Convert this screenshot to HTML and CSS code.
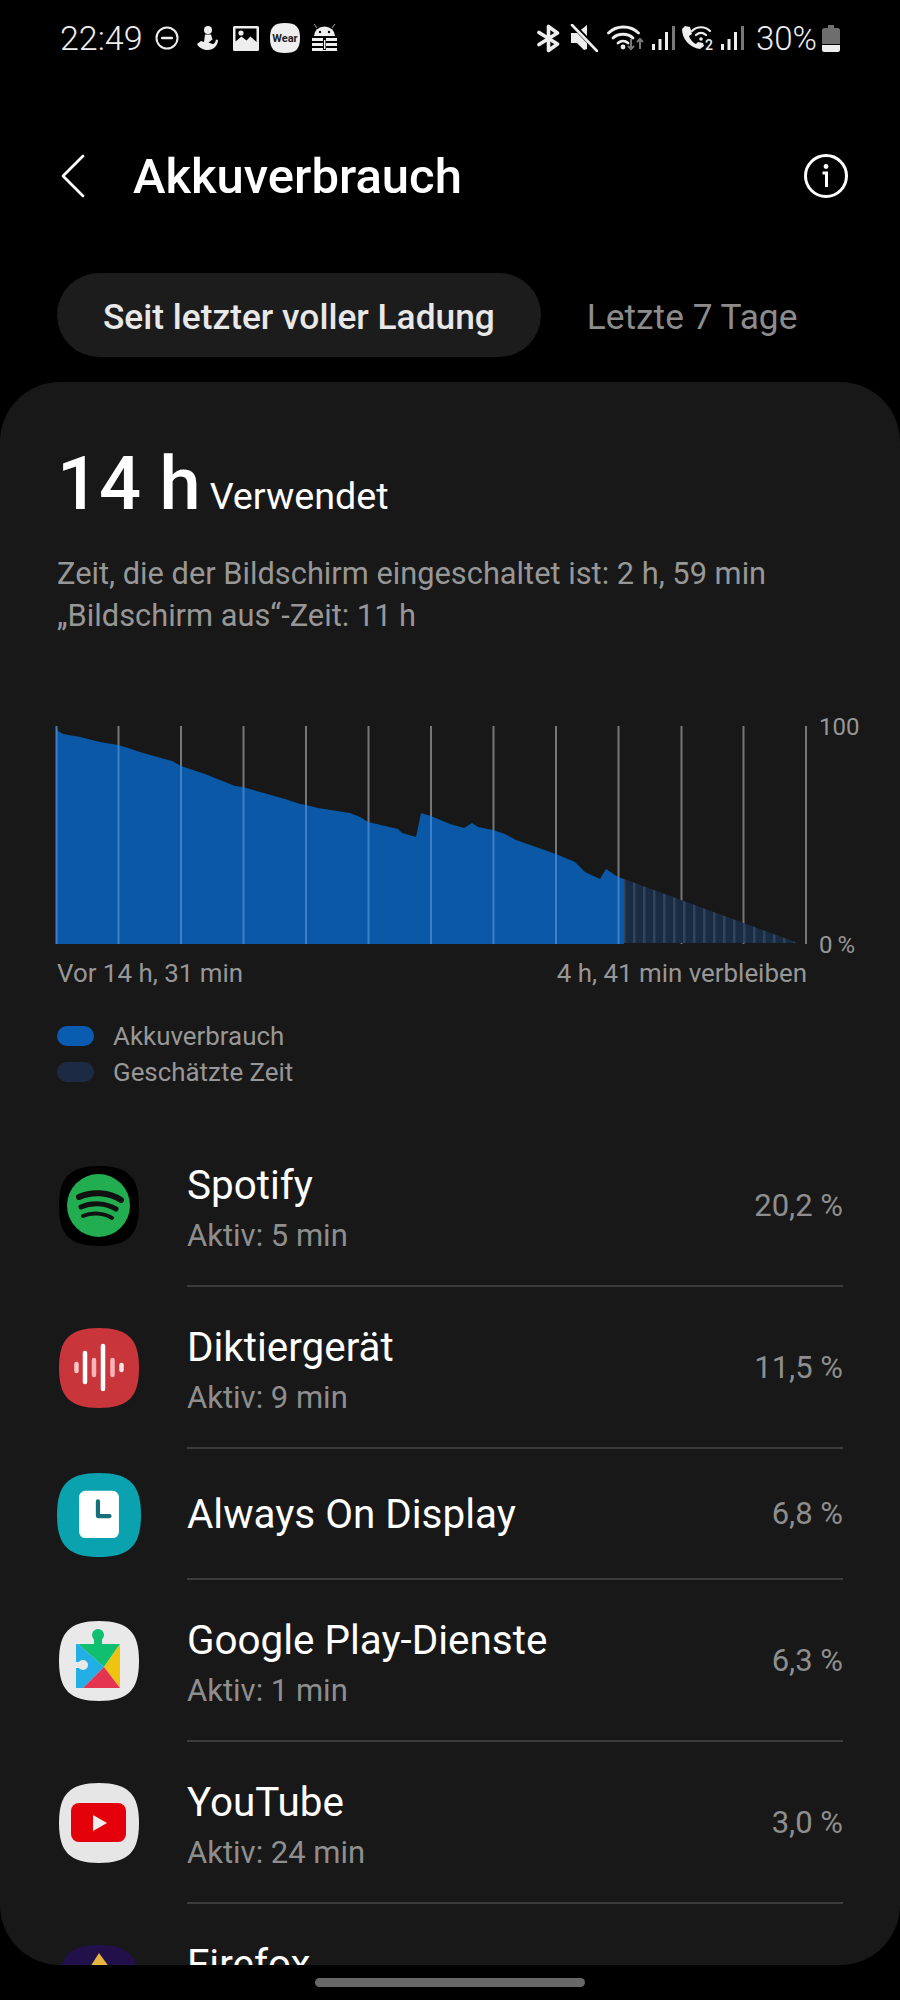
FILE: index.html
```html
<!DOCTYPE html>
<html lang="de">
<head>
  <meta charset="UTF-8">
  <title>Akkuverbrauch</title>
  <link rel="stylesheet" href="styles.css">
</head>
<body>

  <!-- Statusleiste -->
  <div class="status-bar">
    <div class="status-left">
      <span class="status-time">22:49</span>
      <svg class="ic-dnd" width="24" height="24" viewBox="0 0 24 24"><circle cx="12" cy="12" r="10.5" fill="none" stroke="#eee" stroke-width="2"/><rect x="6" y="10.8" width="12" height="2.4" rx="1" fill="#eee"/></svg>
      <svg class="ic-health" width="24" height="26" viewBox="0 0 24 26"><circle cx="13" cy="5" r="4" fill="#eee"/><path d="M10 9.500h6l1.500 5-4 3 4 1.500c2 0 3-2 3.500-4.500l2 .5c0 6-5 10-10 10-4 0-9-2-11-6l4-3 3 1z" fill="#eee"/></svg>
      <svg class="ic-image" width="26" height="25" viewBox="0 0 26 25"><path fill-rule="evenodd" d="M1.5 0h23A1.5 1.5 0 0 1 26 1.500v22a1.500 1.500 0 0 1-1.500 1.500h-23A1.500 1.500 0 0 1 0 23.500v-22A1.500 1.500 0 0 1 1.500 0zM2.500 2.500v13l6-5 5 4 4-4 6 5.500V2.500z" fill="#eee"/><circle cx="8" cy="7" r="2.600" fill="#eee"/></svg>
      <svg class="ic-wear" width="30" height="30" viewBox="0 0 30 30"><path d="M15 0C26 0 30 4 30 15S26 30 15 30 0 26 0 15 4 0 15 0Z" fill="#eee"/><text x="15" y="19" text-anchor="middle" class="wear-text">Wear</text></svg>
      <svg class="ic-keep" width="27" height="28" viewBox="0 0 27 28"><path d="M3 12a10.500 9.500 0 0 1 21 0z" fill="#eee"/><path d="M6 4 3 0M21 4l3-4" stroke="#aaa" stroke-width="1"/><circle cx="9" cy="8" r="1.200" fill="#000"/><circle cx="18" cy="8" r="1.200" fill="#000"/><path d="M1 14h25v3H1zM1 19h25v3H1zM1 24h25v3H1z" fill="#eee"/><rect x="12" y="13" width="3" height="13" fill="#000"/><rect x="13" y="16" width="1.400" height="9" fill="#eee"/></svg>
    </div>
    <div class="status-right">
      <svg class="ic-bt" width="25" height="29" viewBox="0 0 25 29"><path d="M12.500 2.500v24l9-6.500L3 8.500M12.500 2.500l9 6.500L3 20.500" fill="none" stroke="#eee" stroke-width="3.600" stroke-linejoin="round" stroke-linecap="round"/></svg>
      <svg class="ic-mute" width="28" height="28" viewBox="0 0 28 28"><path d="M1 9h6l10-8v24l-3 1-7-7H1z" fill="#eee"/><path d="M2 0l25 26" stroke="#000" stroke-width="5"/><path d="M2 1l25 26" stroke="#eee" stroke-width="2.600" stroke-linecap="round"/></svg>
      <svg class="ic-wifi" width="38" height="28" viewBox="0 0 38 28"><g fill="none" stroke="#eee" stroke-width="2.800" stroke-linecap="round"><path d="M1.500 9c8-8 22-8 30 0"/><path d="M6 14c5-5 15-5 20 0"/><path d="M11 19c3-2.500 7-2.500 10 0"/></g><circle cx="16" cy="23" r="2.400" fill="#eee"/><path d="M24 15v10m-3-3 3 3 3-3" fill="none" stroke="#777" stroke-width="2"/><path d="M33 25V15m-3 3 3-3 3 3" fill="none" stroke="#777" stroke-width="2"/></svg>
      <svg class="ic-signal" width="23" height="24" viewBox="0 0 23 24"><rect x="0" y="18" width="3" height="6" fill="#eee"/><rect x="6.500" y="13" width="3" height="11" fill="#eee"/><rect x="13" y="6" width="3" height="18" fill="#eee"/><rect x="20" y="0" width="3" height="24" fill="#777"/></svg>
      <svg class="ic-call" width="34" height="28" viewBox="0 0 34 28"><path d="M4 2 1 5c0 10 8 19 18 20l4-3-1-3-5-1-2 2c-3-1-6-5-7-8l3-2-2-7z" fill="#eee"/><g fill="none" stroke="#eee" stroke-width="2.200" stroke-linecap="round"><path d="M11 7c5-5 13-5 18 0"/><path d="M15 11c3-2.500 7-2.500 10 0"/></g><circle cx="20" cy="15" r="1.800" fill="#eee"/><text x="24" y="26" class="sim-text">2</text></svg>
      <svg class="ic-signal" width="23" height="24" viewBox="0 0 23 24"><rect x="0" y="18" width="3" height="6" fill="#eee"/><rect x="6.500" y="13" width="3" height="11" fill="#eee"/><rect x="13" y="6" width="3" height="18" fill="#eee"/><rect x="20" y="0" width="3" height="24" fill="#777"/></svg>
      <span class="status-batt">30%</span>
      <svg class="ic-batt" width="18" height="27" viewBox="0 0 18 27"><path d="M6 0h6v3h3.500A2.500 2.500 0 0 1 18 5.500V19H0V5.500A2.500 2.500 0 0 1 2.500 3H6z" fill="#6e6e6e"/><path d="M0 20h18v4.500a2.500 2.500 0 0 1-2.500 2.500h-13A2.500 2.500 0 0 1 0 24.500z" fill="#eee"/></svg>
    </div>
  </div>

  <!-- Kopfzeile -->
  <header class="app-bar">
    <svg class="back-icon" width="26" height="44" viewBox="0 0 26 44"><path d="M23 2 3 22l20 20" fill="none" stroke="#fff" stroke-width="2.800" stroke-linecap="round" stroke-linejoin="round"/></svg>
    <h1 class="app-title">Akkuverbrauch</h1>
    <svg class="info-icon" width="44" height="44" viewBox="0 0 44 44"><circle cx="22" cy="22" r="20.500" fill="none" stroke="#fff" stroke-width="3"/><circle cx="22" cy="12.500" r="2.400" fill="#fff"/><path d="M18.500 19H22.500V33" fill="none" stroke="#fff" stroke-width="3"/></svg>
  </header>

  <!-- Tabs -->
  <div class="tabs">
    <div class="tab tab-active">Seit letzter voller Ladung</div>
    <div class="tab">Letzte 7 Tage</div>
  </div>

  <!-- Karte -->
  <main class="card">
    <div class="usage-head">
      <span class="usage-big">14 h</span>
      <span class="usage-label">Verwendet</span>
    </div>
    <p class="usage-desc">Zeit, die der Bildschirm eingeschaltet ist: 2 h, 59 min<br>„Bildschirm aus“-Zeit: 11 h</p>

    <!-- Diagramm -->
    <div class="chart">
      <svg class="chart-svg" width="752" height="220" viewBox="55 726 752 220">
        <defs>
          <pattern id="est-stripes" x="0" y="0" width="10" height="10" patternUnits="userSpaceOnUse">
            <rect width="10" height="10" fill="#1a2c44"/>
            <rect x="3" width="2.500" height="10" fill="#2f435c"/>
          </pattern>
          <clipPath id="used-clip">
            <path d="M56 727 58 732 63 735 80 738 100 743 118 746 125 748 143 754 172 762 181 767 205 775 235 787 243 788 285 800 300 805 306 806 318 809 350 814 360 818 368 823 398 830 402 834 416 838 421 814 431 817 450 825 464 829 472 824 478 828 493 831 505 835 516 841 556 855 575 863 585 873 600 880 606 870 618 878 624 880V945H56z"/>
          </clipPath>
        </defs>
        <g class="grid-lines">
          <path d="M56.500 727V945M118.500 727V945M181 727V945M243.500 727V945M306 727V945M368.500 727V945M431 727V945M493.500 727V945M556 727V945M618.500 727V945M681.500 727V945M743.500 727V945M806 727V945"/>
        </g>
        <path class="est-area" d="M624 880 798 944H624z"/>
        <rect class="used-area" x="55" y="726" width="570" height="220" clip-path="url(#used-clip)"/>
        <g class="grid-lines-used" clip-path="url(#used-clip)">
          <path d="M56.500 727V945M118.500 727V945M181 727V945M243.500 727V945M306 727V945M368.500 727V945M431 727V945M493.500 727V945M556 727V945M618.500 727V945"/>
        </g>
      </svg>
      <div class="chart-axis">
        <span>100</span>
        <span>0&#8201;%</span>
      </div>
    </div>
    <div class="chart-foot">
      <span>Vor 14 h, 31 min</span>
      <span>4 h, 41 min verbleiben</span>
    </div>

    <ul class="legend">
      <li><i class="swatch swatch-used"></i>Akkuverbrauch</li>
      <li><i class="swatch swatch-est"></i>Geschätzte Zeit</li>
    </ul>

    <!-- App-Liste -->
    <ul class="app-list">
      <li class="app-row">
        <svg class="app-icon" width="80" height="80" viewBox="0 0 80 80"><path d="M40 0C69 0 80 11 80 40S69 80 40 80 0 69 0 40 11 0 40 0Z" fill="#000"/><circle cx="39.500" cy="39.500" r="31.500" fill="#22ad50"/><g fill="none" stroke="#111" stroke-linecap="round"><path d="M20 31C33 25 50 26 62 34" stroke-width="6"/><path d="M22 41C33 36 47 37 57 43" stroke-width="5"/><path d="M24 50C33 46 45 47 53 52" stroke-width="4"/></g></svg>
        <div class="app-body">
          <div class="app-text"><div class="app-name">Spotify</div><div class="app-sub">Aktiv: 5 min</div></div>
          <span class="app-pct">20,2 %</span>
        </div>
      </li>
      <li class="app-row">
        <svg class="app-icon" width="80" height="80" viewBox="0 0 80 80"><path d="M40 0C69 0 80 11 80 40S69 80 40 80 0 69 0 40 11 0 40 0Z" fill="#c8353a"/><g stroke-linecap="round" stroke-width="4.500"><path d="M17.500 36v7" stroke="#f7c5c7"/><path d="M26 25v29" stroke="#fff"/><path d="M35 32v15" stroke="#f8b4b8"/><path d="M44 18v43" stroke="#fff"/><path d="M53.500 32v15" stroke="#f8b4b8"/><path d="M62.500 37v5" stroke="#fde4e5"/></g></svg>
        <div class="app-body">
          <div class="app-text"><div class="app-name">Diktiergerät</div><div class="app-sub">Aktiv: 9 min</div></div>
          <span class="app-pct">11,5 %</span>
        </div>
      </li>
      <li class="app-row app-row-short">
        <svg class="app-icon app-icon-big" width="84" height="84" viewBox="0 0 80 80"><path d="M40 0C69 0 80 11 80 40S69 80 40 80 0 69 0 40 11 0 40 0Z" fill="#0aa2ae"/><rect x="21" y="17" width="38" height="45" rx="6" fill="#fff"/><path d="M39 27v14h11" fill="none" stroke="#176f79" stroke-width="4" stroke-linecap="round" stroke-linejoin="round"/></svg>
        <div class="app-body">
          <div class="app-text"><div class="app-name">Always On Display</div></div>
          <span class="app-pct">6,8 %</span>
        </div>
      </li>
      <li class="app-row">
        <svg class="app-icon" width="80" height="80" viewBox="0 0 80 80"><path d="M40 0C69 0 80 11 80 40S69 80 40 80 0 69 0 40 11 0 40 0Z" fill="#e9e9e9"/><circle cx="39" cy="14" r="6" fill="#10c070"/><path d="M35 16h8v8h-8z" fill="#10c070"/><path d="M19 23H61L45 46z" fill="#10c070"/><path d="M19 23H17V67H24L45 46z" fill="#23aee6"/><path d="M61 23V67L45 46z" fill="#efc410"/><path d="M24 67 45 46 61 67z" fill="#e4344f"/><circle cx="24" cy="44" r="5" fill="#e9e9e9"/><path d="M16 41h8v6h-8z" fill="#e9e9e9"/></svg>
        <div class="app-body">
          <div class="app-text"><div class="app-name">Google Play-Dienste</div><div class="app-sub">Aktiv: 1 min</div></div>
          <span class="app-pct">6,3 %</span>
        </div>
      </li>
      <li class="app-row">
        <svg class="app-icon" width="80" height="80" viewBox="0 0 80 80"><path d="M40 0C69 0 80 11 80 40S69 80 40 80 0 69 0 40 11 0 40 0Z" fill="#e6e6e6"/><rect x="12" y="20" width="55" height="39" rx="8" fill="#e3000b"/><path d="M34 32 48 40 34 48z" fill="#eee"/></svg>
        <div class="app-body">
          <div class="app-text"><div class="app-name">YouTube</div><div class="app-sub">Aktiv: 24 min</div></div>
          <span class="app-pct">3,0 %</span>
        </div>
      </li>
      <li class="app-row app-row-last">
        <svg class="app-icon" width="80" height="80" viewBox="0 0 80 80"><path d="M40 0C69 0 80 11 80 40S69 80 40 80 0 69 0 40 11 0 40 0Z" fill="#21104a"/><path d="M40 8 56 30H26z" fill="#e6b640"/></svg>
        <div class="app-body">
          <div class="app-text"><div class="app-name">Firefox</div></div>
        </div>
      </li>
    </ul>
  </main>

  <div class="home-area"><span class="home-bar"></span></div>

</body>
</html>
```

FILE: styles.css
```css
/* ========== Allgemein ========== */
:root {
  --text: #fff;
  --text-dim: #979797;
  --card: #181818;
  --line: #3c3c3c;
}

* {
  box-sizing: border-box;
}

html, body {
  height: 2000px;
}

body {
  margin: 0;
  background: #000;
  color: var(--text);
  font-family: Roboto, "Noto Sans", sans-serif;
  overflow: hidden;
}

/* ========== Statusleiste ========== */
.status-bar {
  display: flex;
  justify-content: space-between;
  align-items: center;
  height: 76px;
  padding: 0 60px;
  color: #eee;
}
.status-left, .status-right {
  display: flex;
  align-items: center;
}
.status-time {
  font-size: 34px;
  font-weight: 300;
  margin-right: 12px;
}
.ic-dnd { margin-right: 16px; }
.ic-health { margin-right: 14px; }
.ic-image { margin-right: 11px; }
.ic-wear { margin-right: 11px; }

.status-right svg { margin-right: 9px; }
.status-right .ic-batt { margin-right: 0; }
.status-right .ic-call { margin-right: 6px; overflow: visible; }
.status-right .ic-wifi { margin-right: 7px; }
.status-right .ic-signal { margin-right: 6px; }
.status-batt {
  font-size: 33px;
  font-weight: 300;
  margin: 0 5px 0 6px;
}
.wear-text {
  font-family: Roboto, sans-serif;
  font-size: 11px;
  font-weight: 700;
  fill: #222;
}
.sim-text {
  font-family: Roboto, sans-serif;
  font-size: 14px;
  font-weight: 500;
  fill: #eee;
}

/* ========== Kopfzeile ========== */
.app-bar {
  display: flex;
  align-items: center;
  height: 80px;
  margin-top: 60px;
  padding: 0 52px 0 60px;
}
.back-icon {
  margin-right: 47px;
}
.app-title {
  flex: 1;
  margin: 0;
  font-size: 49px;
  font-weight: 500;
}

/* ========== Tabs ========== */
.tabs {
  display: flex;
  align-items: center;
  height: 84px;
  margin: 57px 0 25px 57px;
}
.tab {
  height: 84px;
  line-height: 88px;
  padding: 0 46px;
  font-size: 35.3px;
  color: #8c8c8c;
}
.tab-active {
  background: #1c1c1c;
  border-radius: 42px;
  color: #e8e8e8;
  font-weight: 500;
}

/* ========== Karte ========== */
.card {
  height: 1583px;
  background: var(--card);
  border-radius: 60px;
  overflow: hidden;
  padding: 0 57px;
}
.usage-head {
  display: flex;
  align-items: baseline;
  padding: 58px 0 0;
  height: 136px;
}
.usage-big {
  font-size: 74px;
  font-weight: 500;
  margin-right: 9px;
}
.usage-label {
  font-size: 37.7px;
}
.usage-desc {
  margin: 35px 0 0;
  font-size: 30.8px;
  line-height: 42px;
  color: var(--text-dim);
}

/* ========== Diagramm ========== */
.chart {
  display: flex;
  margin: 88px 0 0 -2px;
}
.chart-svg {
  display: block;
  flex: none;
}
.chart-axis {
  display: flex;
  flex-direction: column;
  justify-content: space-between;
  margin: -13px 0 -15px 12px;
  font-size: 24px;
  line-height: 30px;
  color: var(--text-dim);
  white-space: nowrap;
}
.grid-lines path {
  stroke: #767676;
  stroke-width: 2;
  fill: none;
}
.grid-lines-used path {
  stroke: #3d81cb;
  stroke-width: 2;
  fill: none;
}
.used-area {
  fill: #0a58a6;
}
.est-area {
  fill: url(#est-stripes);
}
.chart-foot {
  display: flex;
  justify-content: space-between;
  width: 750px;
  margin-top: 12px;
  font-size: 25.9px;
  line-height: 32px;
  color: var(--text-dim);
}

/* ========== Legende ========== */
.legend {
  list-style: none;
  margin: 29px 0 0;
  padding: 0;
  font-size: 25.9px;
  line-height: 36px;
  color: var(--text-dim);
}
.legend li {
  display: flex;
  align-items: center;
}
.swatch {
  width: 37px;
  height: 20px;
  border-radius: 10px;
  margin-right: 19px;
}
.swatch-used { background: #0a5cb0; }
.swatch-est { background: #1c2a44; }

/* ========== App-Liste ========== */
.app-list {
  list-style: none;
  margin: 35px 0 0;
  padding: 0;
}
.app-row {
  display: flex;
  align-items: center;
}
.app-icon {
  flex: none;
  margin-left: 2px;
  margin-right: 48px;
}
.app-icon-big {
  margin-left: 0;
  margin-right: 46px;
}
.app-body {
  flex: 1;
  display: flex;
  align-items: center;
  justify-content: space-between;
  height: 162px;
  border-bottom: 2px solid var(--line);
}
.app-row-short .app-body {
  height: 131px;
}
.app-text {
  padding-top: 13px;
}
.app-row-short .app-text {
  padding-top: 2px;
}
.app-row-last .app-text {
  padding-top: 8px;
  padding-bottom: 46px;
}
.app-name {
  font-size: 40.4px;
  line-height: 48px;
}
.app-sub {
  font-size: 31px;
  line-height: 51px;
  color: #8e8e8e;
}
.app-pct {
  font-size: 31px;
  color: #8e8e8e;
}

/* ========== Home-Leiste ========== */
.home-area {
  display: flex;
  justify-content: center;
  padding-top: 13px;
}
.home-bar {
  width: 270px;
  height: 9px;
  border-radius: 5px;
  background: #686868;
}
```
